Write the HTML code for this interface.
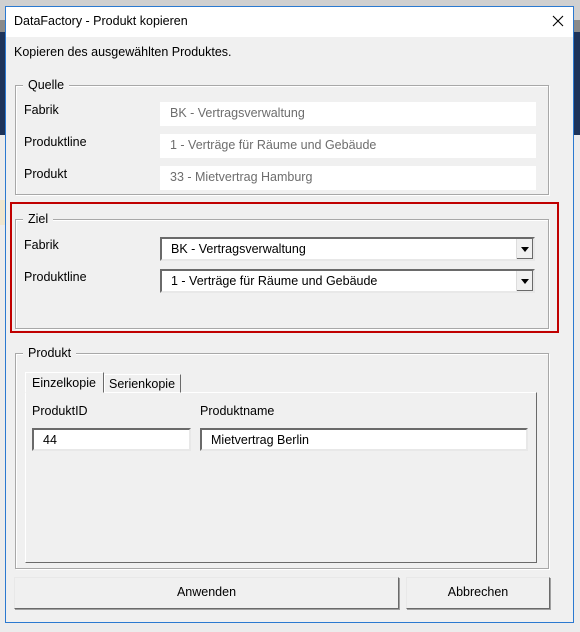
<!DOCTYPE html>
<html><head><meta charset="utf-8"><style>
*{box-sizing:border-box;margin:0;padding:0}
body{width:580px;height:632px;background:#ececec;position:relative;overflow:hidden;font-family:"Liberation Sans","DejaVu Sans",sans-serif;font-size:12px;color:#000}
.a{position:absolute}
#win{left:5px;top:6px;width:569px;height:617px;border:1px solid #2b79d0;background:#f0f0f0}
.t{white-space:nowrap}
.inp{background:#fff;color:#6d6d6d;padding:4px 10px;font-size:12.5px}
.grp{border:1px solid #a8a8a8;box-shadow:inset 1px 1px #fff,1px 1px #fff}
.lg{background:#f0f0f0;padding:0 5px;font-size:12.5px}
.sunk{background:#fff;border:2px solid;border-color:#6a6a6a #e8e8e8 #e8e8e8 #6a6a6a;padding:3px 9px;font-size:12.5px}
.btn{border:1px solid;border-color:#e8e8e8 #6a6a6a #6a6a6a #e8e8e8;background:#f0f0f0;text-align:center;line-height:29px;font-size:12.5px;box-shadow:1px 1px #a0a0a0}
.dd{position:absolute;right:0;top:0;width:17px;height:100%;background:#f0f0f0;border-left:1px solid #ddd;box-shadow:inset -1px -1px #6a6a6a}
.dd:after{content:"";position:absolute;left:4px;top:8px;border:4px solid transparent;border-top:5px solid #000}
</style></head><body>
<div class="a" style="left:0;top:0;width:580px;height:20px;background:#d0d0d0"></div>
<div class="a" style="left:0;top:20px;width:580px;height:12px;background:#8a8a8a"></div>
<div class="a" style="left:574px;top:32px;width:6px;height:103px;background:#1d3359"></div>
<div class="a" style="left:0;top:32px;width:5px;height:103px;background:#1d3359"></div>
<div class="a" style="left:0;top:200px;width:5px;height:25px;background:#efe6cf"></div>
<div class="a" id="win"></div>
<div class="a" style="left:6px;top:7px;width:567px;height:30px;background:#fff"></div>
<div class="a t" style="left:14px;top:14px;font-size:12.5px">DataFactory - Produkt kopieren</div>
<svg class="a" style="left:552px;top:15px" width="12" height="12"><path d="M1 1L11 11M11 1L1 11" stroke="#000" stroke-width="1.1"/></svg>
<div class="a t" style="left:14px;top:45px;font-size:12.5px">Kopieren des ausgewählten Produktes.</div>

<div class="a grp" style="left:15px;top:85px;width:534px;height:110px"></div>
<div class="a lg t" style="left:23px;top:78px">Quelle</div>
<div class="a t" style="left:24px;top:103px;font-size:12.5px">Fabrik</div>
<div class="a t" style="left:24px;top:135px;font-size:12.5px">Produktline</div>
<div class="a t" style="left:24px;top:167px;font-size:12.5px">Produkt</div>
<div class="a inp t" style="left:160px;top:102px;width:376px;height:24px">BK - Vertragsverwaltung</div>
<div class="a inp t" style="left:160px;top:134px;width:376px;height:24px">1 - Verträge für Räume und Gebäude</div>
<div class="a inp t" style="left:160px;top:166px;width:376px;height:24px">33 - Mietvertrag Hamburg</div>

<div class="a" style="left:10px;top:202px;width:549px;height:131px;border:2px solid #c00000"></div>
<div class="a grp" style="left:15px;top:219px;width:534px;height:110px"></div>
<div class="a lg t" style="left:23px;top:212px">Ziel</div>
<div class="a t" style="left:24px;top:238px;font-size:12.5px">Fabrik</div>
<div class="a t" style="left:24px;top:270px;font-size:12.5px">Produktline</div>
<div class="a sunk t" style="left:160px;top:237px;width:375px;height:24px;color:#000">BK - Vertragsverwaltung<div class="dd"></div></div>
<div class="a sunk t" style="left:160px;top:269px;width:375px;height:24px;color:#000">1 - Verträge für Räume und Gebäude<div class="dd"></div></div>

<div class="a grp" style="left:15px;top:353px;width:534px;height:216px"></div>
<div class="a lg t" style="left:23px;top:346px">Produkt</div>
<div class="a" style="left:25px;top:392px;width:512px;height:171px;border:1px solid;border-color:#fff #6a6a6a #6a6a6a #fff"></div>
<div class="a t" style="left:25px;top:372px;width:79px;height:21px;border:1px solid;border-color:#fff #6a6a6a transparent #fff;background:#f0f0f0;padding:3px 6px;font-size:12.5px">Einzelkopie</div>
<div class="a t" style="left:104px;top:374px;width:77px;height:19px;border:1px solid;border-color:#fff #6a6a6a transparent #fff;padding:2px 4px;font-size:12.5px">Serienkopie</div>
<div class="a t" style="left:32px;top:404px;font-size:12.5px">ProduktID</div>
<div class="a t" style="left:200px;top:404px;font-size:12.5px">Produktname</div>
<div class="a sunk t" style="left:32px;top:428px;width:159px;height:23px">44</div>
<div class="a sunk t" style="left:200px;top:428px;width:328px;height:23px">Mietvertrag Berlin</div>

<div class="a btn" style="left:14px;top:577px;width:385px;height:32px">Anwenden</div>
<div class="a btn" style="left:406px;top:577px;width:144px;height:32px">Abbrechen</div>
</body></html>
